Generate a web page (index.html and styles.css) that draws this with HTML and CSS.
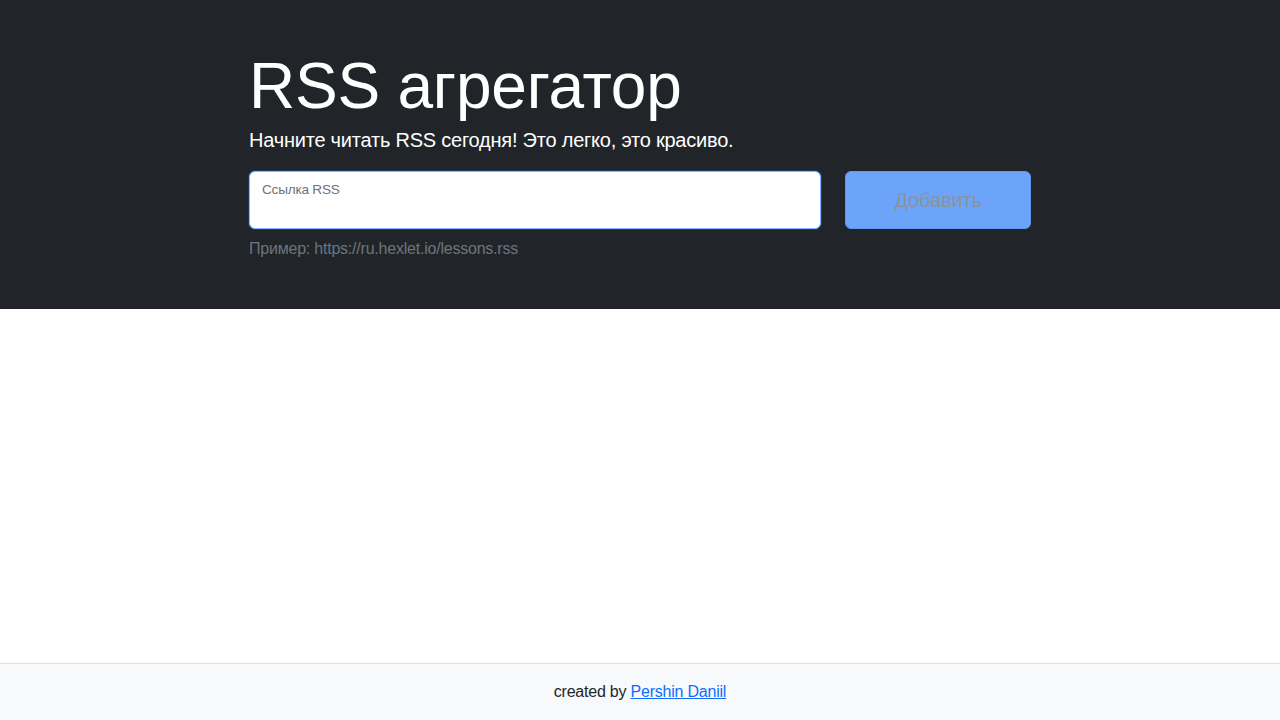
FILE: index.html
```html
<!DOCTYPE html>
<html lang="ru">
<head>
<meta charset="utf-8">
<title>RSS агрегатор</title>
<link rel="stylesheet" href="styles.css">
</head>
<body>
<main class="main">
  <section class="hero">
    <div class="hero-inner">
      <h1 class="title">RSS агрегатор</h1>
      <p class="lead">Начните читать RSS сегодня! Это легко, это красиво.</p>
      <form class="rss-form">
        <div class="field">
          <input class="field-input" id="url-input" type="text" aria-label="url">
          <label class="field-label" for="url-input">Ссылка RSS</label>
        </div>
        <button class="btn-add" type="submit" disabled>Добавить</button>
      </form>
      <p class="example">Пример: https://ru.hexlet.io/lessons.rss</p>
    </div>
  </section>
</main>
<footer class="footer">
  <div class="footer-text">created by <a class="footer-link" href="#">Pershin Daniil</a></div>
</footer>
</body>
</html>
```

FILE: styles.css
```css
* { box-sizing: border-box; }
html, body { margin: 0; padding: 0; }
body {
  font-family: "Liberation Sans", Arial, sans-serif;
  font-size: 16px;
  line-height: 1.5;
  letter-spacing: -0.22px;
  color: #212529;
  background: #fff;
  min-height: 100vh;
  display: flex;
  flex-direction: column;
}
.main { flex: 1 0 auto; }
.hero {
  background: #212529;
  padding: 48px;
}
.hero-inner {
  width: 782px;
  margin: 0 auto;
  color: #fff;
}
.title {
  margin: 0;
  font-size: 64px;
  font-weight: 300;
  line-height: 1.2;
}
.lead {
  margin: 0 0 16px;
  font-size: 20px;
  font-weight: 300;
  line-height: 1.5;
}
.rss-form {
  display: flex;
  gap: 24px;
}
.field {
  position: relative;
  flex: 1;
}
.field-input {
  display: block;
  width: 100%;
  height: 58px;
  padding: 26px 12px 10px;
  font-family: inherit;
  font-size: 16px;
  color: #212529;
  background: #fff;
  border: 1px solid #86b7fe;
  border-radius: 6px;
  outline: none;
  box-shadow: 0 0 0 1px rgba(13, 110, 253, 0.3);
}
.field-label {
  position: absolute;
  top: 9px;
  left: 13px;
  font-size: 13.6px;
  line-height: 1.5;
  color: #212529;
  opacity: 0.65;
  pointer-events: none;
}
.btn-add {
  height: 58px;
  padding: 8px 48px;
  font-family: inherit;
  font-size: 20px;
  line-height: 1.5;
  letter-spacing: -0.1px;
  color: #8c939c;
  background: #6ba4f8;
  border: 1px solid #5e98ec;
  border-radius: 6px;
}
.example {
  margin: 8px 0 0;
  color: #6c757d;
}
.footer {
  flex-shrink: 0;
  background: #f8f9fa;
  border-top: 1px solid #dee2e6;
  padding: 16px 0;
}
.footer-text { text-align: center; }
.footer-link { color: #0d6efd; text-decoration: underline; }
```
